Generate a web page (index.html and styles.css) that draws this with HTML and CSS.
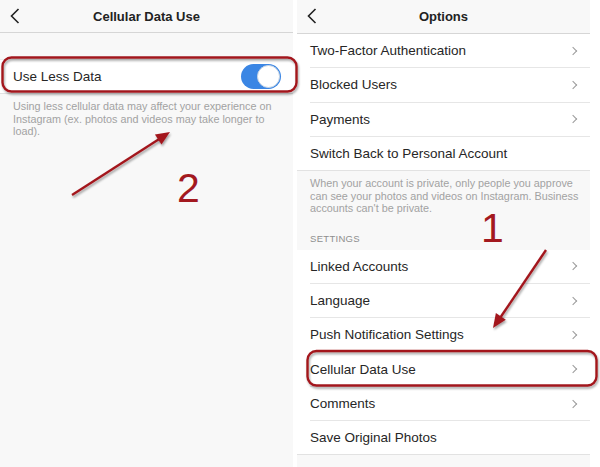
FILE: index.html
```html
<!DOCTYPE html>
<html lang="en">
<head>
  <meta charset="UTF-8" />
  <title>Cellular Data Use</title>
  <link rel="stylesheet" href="styles.css">
</head>
<body>
  <div class="screens">
    <section class="phone">
      <header class="topbar">
        <svg class="back" width="10" height="16" viewBox="0 0 10 16"><path d="M8.5 1 L1.5 8 L8.5 15" fill="none" stroke="#222" stroke-width="1.6"/></svg>
        <h1>Cellular Data Use</h1>
      </header>
      <div class="group first">
        <div class="row">
          <span>Use Less Data</span>
          <div class="toggle"><div class="knob"></div></div>
        </div>
      </div>
      <p class="note">Using less cellular data may affect your experience on Instagram (ex. photos and videos may take longer to load).</p>
    </section>

    <section class="phone">
      <header class="topbar">
        <svg class="back" width="10" height="16" viewBox="0 0 10 16"><path d="M8.5 1 L1.5 8 L8.5 15" fill="none" stroke="#222" stroke-width="1.6"/></svg>
        <h1>Options</h1>
      </header>
      <div class="group">
        <div class="row"><span>Two-Factor Authentication</span><i class="chev"></i></div>
        <div class="row"><span>Blocked Users</span><i class="chev"></i></div>
        <div class="row"><span>Payments</span><i class="chev"></i></div>
        <div class="row"><span>Switch Back to Personal Account</span></div>
      </div>
      <p class="note">When your account is private, only people you approve can see your photos and videos on Instagram. Business accounts can't be private.</p>
      <div class="section-title">SETTINGS</div>
      <div class="group">
        <div class="row"><span>Linked Accounts</span><i class="chev"></i></div>
        <div class="row"><span>Language</span><i class="chev"></i></div>
        <div class="row"><span>Push Notification Settings</span><i class="chev"></i></div>
        <div class="row"><span>Cellular Data Use</span><i class="chev"></i></div>
        <div class="row"><span>Comments</span><i class="chev"></i></div>
        <div class="row"><span>Save Original Photos</span></div>
      </div>
    </section>
  </div>

  <!-- annotations drawn over both screenshots -->
  <svg class="marks" width="600" height="467" viewBox="0 0 600 467">
    <defs>
      <filter id="shade" x="-10%" y="-10%" width="120%" height="130%">
        <feDropShadow dx="1" dy="2" stdDeviation="1.2" flood-color="#000" flood-opacity="0.35"/>
      </filter>
    </defs>
    <g filter="url(#shade)" fill="none" stroke="#a3191f" stroke-width="2.4">
      <rect x="2.5" y="57.5" width="294" height="34" rx="9"/>
      <rect x="307.5" y="351" width="289" height="34.5" rx="9"/>
      <line x1="72" y1="195" x2="160" y2="138.5"/>
      <line x1="546" y1="250" x2="500" y2="318"/>
    </g>
    <g filter="url(#shade)" fill="#a3191f">
      <polygon points="170,132 161.5,144.6 154.9,134.5"/>
      <polygon points="493,328 505.8,319.8 495.9,313.1"/>
    </g>
    <text x="177" y="202" class="digit">2</text>
    <text x="481" y="242" class="digit">1</text>
  </svg>
</body>
</html>
```

FILE: styles.css
```css
body {
  margin: 0;
  background-color: #FFFFFF;
  font-family: 'Liberation Sans', Arial, sans-serif;
  color: #262626;
  position: relative;
  width: 600px;
  height: 467px;
  overflow: hidden;
}
.screens {
  display: flex;
  gap: 4px;
  height: 467px;
}
.phone {
  width: 293px;
  background-color: #F8F8F8;
}
.topbar {
  height: 33px;
  border-bottom: 1px solid #D6D6D6;
  display: flex;
  align-items: center;
  justify-content: center;
  position: relative;
}
.phone:first-child .topbar {
  height: 32px;
}
.topbar h1 {
  margin: 0;
  font-size: 13px;
  font-weight: 700;
  color: #222;
}
.back {
  position: absolute;
  left: 10px;
  top: 8px;
}
.group {
  background-color: #FFFFFF;
  border-bottom: 1px solid #E2E2E2;
}
.group.first {
  margin-top: 26px;
  border-top: 1px solid #ECECEC;
}
.row {
  height: 33.3px;
  margin-left: 13px;
  padding-right: 12px;
  display: flex;
  align-items: center;
  justify-content: space-between;
  font-size: 13.5px;
  border-bottom: 1px solid #E6E6E6;
}
.row:last-child {
  border-bottom: none;
}
.phone:first-child .row {
  height: 33px;
  padding-right: 12px;
}
.chev {
  width: 5px;
  height: 5px;
  border-top: 1.4px solid #9A9A9A;
  border-right: 1.4px solid #9A9A9A;
  transform: rotate(45deg);
  margin-right: 2px;
}
.toggle {
  width: 40px;
  height: 25px;
  border-radius: 13px;
  background-color: #3B86E4;
  position: relative;
}
.knob {
  position: absolute;
  right: 1px;
  top: 1px;
  width: 21px;
  height: 21px;
  border-radius: 50%;
  background-color: #FFFFFF;
  border: 1px solid #C9D6E4;
}
.note {
  margin: 0;
  padding: 6px 10px 0 13px;
  font-size: 10.8px;
  line-height: 12.5px;
  color: #A2A2A2;
}
.section-title {
  padding: 18px 13px 6px;
  font-size: 9.5px;
  line-height: 11px;
  color: #8E8E8E;
  letter-spacing: 0.3px;
}
.marks {
  position: absolute;
  left: 0;
  top: 0;
  pointer-events: none;
}
.digit {
  font-family: 'Liberation Sans', Arial, sans-serif;
  font-size: 41px;
  fill: #A3191F;
}
```
